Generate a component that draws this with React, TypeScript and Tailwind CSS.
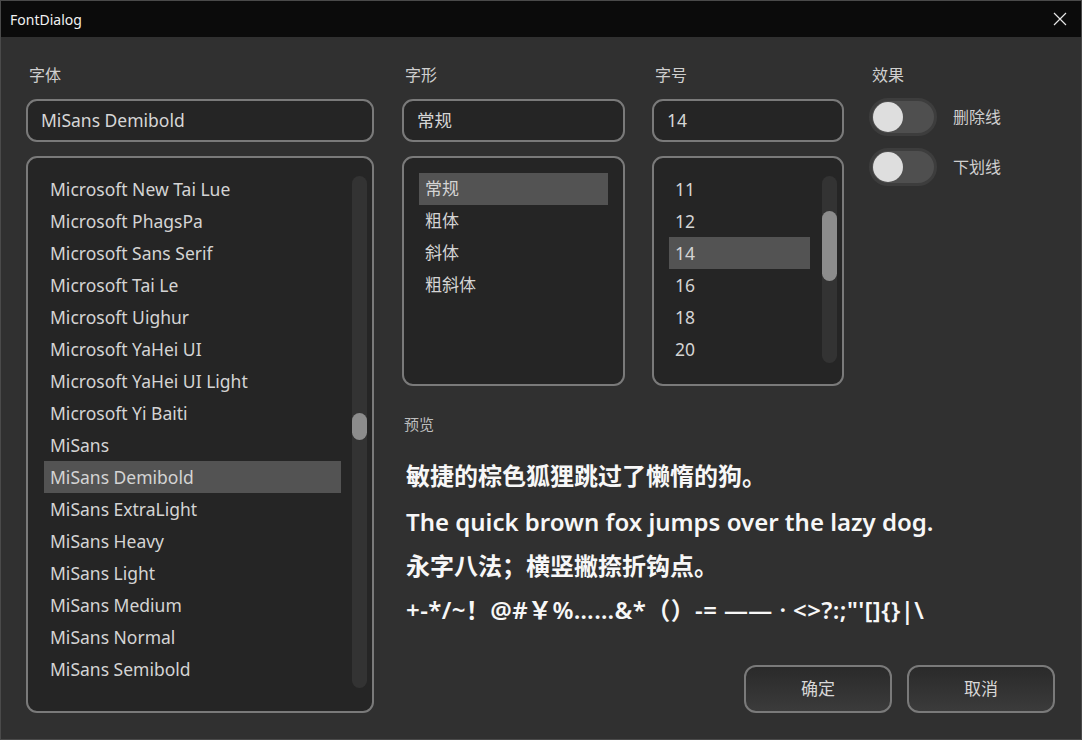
import React from "react";

const fontList = [
  "Microsoft New Tai Lue",
  "Microsoft PhagsPa",
  "Microsoft Sans Serif",
  "Microsoft Tai Le",
  "Microsoft Uighur",
  "Microsoft YaHei UI",
  "Microsoft YaHei UI Light",
  "Microsoft Yi Baiti",
  "MiSans",
  "MiSans Demibold",
  "MiSans ExtraLight",
  "MiSans Heavy",
  "MiSans Light",
  "MiSans Medium",
  "MiSans Normal",
  "MiSans Semibold",
];

const styleList = ["常规", "粗体", "斜体", "粗斜体"];
const sizeList = ["11", "12", "14", "16", "18", "20"];

const ui =
  "[font-family:'Noto_Sans','Noto_Sans_CJK_SC',sans-serif]";

function Label({ children }: { children: React.ReactNode }) {
  return <div className="h-[24px] pl-[3px] text-[16px] leading-[24px] text-[#cfcfcf]">{children}</div>;
}

function Field({ value }: { value: string }) {
  return (
    <div className="mt-[12px] flex h-[43px] items-center rounded-[11px] border-2 border-[#7a7a7a] bg-[#252525] px-[13px] text-[17.5px] text-[#d6d6d6]">
      {value}
    </div>
  );
}

function ScrollTrack({ thumbTop, thumbH, trackH }: { thumbTop: number; thumbH: number; trackH: number }) {
  return (
    <div className="absolute right-[5px] top-[18px] w-[15px] rounded-full bg-[#333333]" style={{ height: trackH }}>
      <div className="absolute left-0 w-[15px] rounded-full bg-[#8c8c8c]" style={{ top: thumbTop, height: thumbH }} />
    </div>
  );
}

function Toggle({ label }: { label: string }) {
  return (
    <div className="flex h-[38px] items-center">
      <div className="flex h-[38px] w-[68px] items-center rounded-full border-[3px] border-[#3d3d3d] bg-[#4f4f4f] pl-[1px]">
        <div className="h-[30px] w-[30px] rounded-full bg-[#dedede]" />
      </div>
      <span className="ml-[16px] text-[16px] text-[#cfcfcf]">{label}</span>
    </div>
  );
}

export default function App() {
  return (
    <div className={`${ui} flex h-[740px] w-[1082px] flex-col overflow-hidden border border-[#4a4a4a] bg-[#303030]`}>
      <div className="flex h-[36px] shrink-0 items-center justify-between bg-[#0b0b0b] pl-[9px] pr-[14px]">
        <span className="text-[14px] text-[#f2f2f2]">FontDialog</span>
        <svg width="14" height="14" viewBox="0 0 14 14" className="text-[#e6e6e6]">
          <path d="M1 1L13 13M13 1L1 13" stroke="currentColor" strokeWidth="1.2" />
        </svg>
      </div>

      <div className="flex gap-[28px] pl-[25px] pt-[26px]">
        {/* font family column */}
        <div className="w-[348px]">
          <Label>字体</Label>
          <Field value="MiSans Demibold" />
          <div className="relative mt-[14px] h-[557px] rounded-[11px] border-2 border-[#7a7a7a] bg-[#252525]">
            <div className="pl-[16px] pt-[15px]">
              {fontList.map((f) => (
                <div
                  key={f}
                  className={`flex h-[32px] w-[297px] items-center pl-[6px] text-[17.5px] text-[#d4d4d4] ${
                    f === "MiSans Demibold" ? "bg-[#535353]" : ""
                  }`}
                >
                  {f}
                </div>
              ))}
            </div>
            <ScrollTrack trackH={512} thumbTop={237} thumbH={27} />
          </div>
        </div>

        {/* right area */}
        <div className="flex w-[653px] flex-col">
          <div className="flex">
            <div className="w-[223px]">
              <Label>字形</Label>
              <Field value="常规" />
              <div className="mt-[14px] h-[230px] rounded-[11px] border-2 border-[#7a7a7a] bg-[#252525] pl-[15px] pt-[15px]">
                {styleList.map((s) => (
                  <div
                    key={s}
                    className={`flex h-[32px] w-[189px] items-center pl-[6px] text-[17px] text-[#d4d4d4] ${
                      s === "常规" ? "bg-[#535353]" : ""
                    }`}
                  >
                    {s}
                  </div>
                ))}
              </div>
            </div>

            <div className="ml-[27px] w-[192px]">
              <Label>字号</Label>
              <Field value="14" />
              <div className="relative mt-[14px] h-[230px] rounded-[11px] border-2 border-[#7a7a7a] bg-[#252525] pl-[15px] pt-[15px]">
                {sizeList.map((s) => (
                  <div
                    key={s}
                    className={`flex h-[32px] w-[141px] items-center pl-[6px] text-[17.5px] text-[#d4d4d4] ${
                      s === "14" ? "bg-[#535353]" : ""
                    }`}
                  >
                    {s}
                  </div>
                ))}
                <ScrollTrack trackH={187} thumbTop={35} thumbH={70} />
              </div>
            </div>

            <div className="ml-[25px] flex flex-col">
              <Label>效果</Label>
              <div className="mt-[11px] flex flex-col gap-[12px]">
                <Toggle label="删除线" />
                <Toggle label="下划线" />
              </div>
            </div>
          </div>

          <div className="mt-[28px] h-[20px] pl-[2px] text-[15px] leading-[20px] text-[#bdbdbd]">预览</div>
          <div className="mt-[20px] pl-[4px] text-[24px] font-semibold leading-[44px] text-[#f7f7f7]">
            <div className="h-[45px]">敏捷的棕色狐狸跳过了懒惰的狗。</div>
            <div className="h-[44px] pt-[1px]">The quick brown fox jumps over the lazy dog.</div>
            <div className="h-[44px] pt-[1px]">永字八法；横竖撇捺折钩点。</div>
            <div className="h-[44px] whitespace-pre pt-[1px] tracking-[0.4px]">+-*/~！@#￥%……&amp;*（）-= —— · &lt;&gt;?:;"'[]{"{}"}|\</div>
          </div>

          <div className="mt-[34px] flex justify-end gap-[15px]">
            <button className="h-[48px] w-[148px] rounded-[12px] border-2 border-[#7a7a7a] bg-gradient-to-b from-[#2a2a2a] to-[#3b3b3b] text-[17px] text-[#d8d8d8]">
              确定
            </button>
            <button className="h-[48px] w-[148px] rounded-[12px] border-2 border-[#7a7a7a] bg-gradient-to-b from-[#2a2a2a] to-[#3b3b3b] text-[17px] text-[#d8d8d8]">
              取消
            </button>
          </div>
        </div>
      </div>
    </div>
  );
}
